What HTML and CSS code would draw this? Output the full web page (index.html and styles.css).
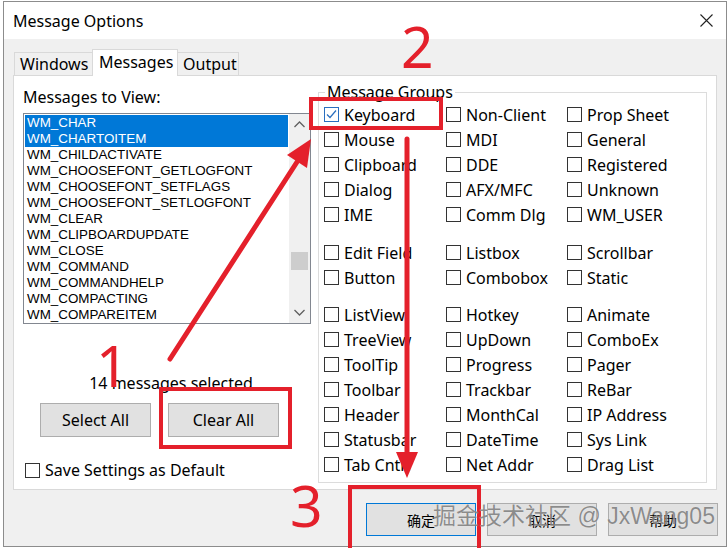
FILE: index.html
```html
<!DOCTYPE html>
<html lang="en">
<head>
    <meta charset="UTF-8">
    <title>Message Options</title>
    <link rel="stylesheet" href="styles.css">
</head>
<body>

    <div class="window">
        <!-- Title bar -->
        <div class="titlebar">
            <span class="title">Message Options</span>
            <svg class="close" width="13" height="13" viewBox="0 0 13 13">
                <path d="M0.5 0.5 L12.5 12.5 M12.5 0.5 L0.5 12.5" stroke="#222" stroke-width="1.1" fill="none"/>
            </svg>
        </div>

        <div class="client">
            <div class="tabs">
                <div class="tab tab-windows">Windows</div>
                <div class="tab tab-messages active">Messages</div>
                <div class="tab tab-output">Output</div>
            </div>

            <div class="panel">
                <!-- Left column: message list -->
                <div class="left">
                    <div class="label">Messages to View:</div>
                    <div class="listbox">
                        <ul class="items">
                            <li class="selected">WM_CHAR</li>
                            <li class="selected">WM_CHARTOITEM</li>
                            <li>WM_CHILDACTIVATE</li>
                            <li>WM_CHOOSEFONT_GETLOGFONT</li>
                            <li>WM_CHOOSEFONT_SETFLAGS</li>
                            <li>WM_CHOOSEFONT_SETLOGFONT</li>
                            <li>WM_CLEAR</li>
                            <li>WM_CLIPBOARDUPDATE</li>
                            <li>WM_CLOSE</li>
                            <li>WM_COMMAND</li>
                            <li>WM_COMMANDHELP</li>
                            <li>WM_COMPACTING</li>
                            <li>WM_COMPAREITEM</li>
                        </ul>
                        <div class="scrollbar">
                            <div class="arrow">
                                <svg width="11" height="7" viewBox="0 0 11 7"><path d="M0.5 6 L5.5 1 L10.5 6" stroke="#606060" stroke-width="1.3" fill="none"/></svg>
                            </div>
                            <div class="track"><div class="thumb"></div></div>
                            <div class="arrow">
                                <svg width="11" height="7" viewBox="0 0 11 7"><path d="M0.5 1 L5.5 6 L10.5 1" stroke="#606060" stroke-width="1.3" fill="none"/></svg>
                            </div>
                        </div>
                    </div>
                    <div class="status">14 messages selected</div>
                    <div class="btn-row">
                        <button class="btn">Select All</button>
                        <button class="btn">Clear All</button>
                    </div>
                    <div class="check save"><span class="box"></span>Save Settings as Default</div>
                </div>

                <!-- Right column: message groups -->
                <fieldset class="groups">
                    <legend>Message Groups</legend>
                    <div class="grid">
                        <div class="check"><span class="box checked">
                            <svg width="13" height="13" viewBox="0 0 13 13"><path d="M2 6.5 L5 9.5 L11 2.5" stroke="#2a6fbf" stroke-width="1.2" fill="none"/></svg>
                        </span>Keyboard</div>
                        <div class="check"><span class="box"></span>Non-Client</div>
                        <div class="check"><span class="box"></span>Prop Sheet</div>
                        <div class="check"><span class="box"></span>Mouse</div>
                        <div class="check"><span class="box"></span>MDI</div>
                        <div class="check"><span class="box"></span>General</div>
                        <div class="check"><span class="box"></span>Clipboard</div>
                        <div class="check"><span class="box"></span>DDE</div>
                        <div class="check"><span class="box"></span>Registered</div>
                        <div class="check"><span class="box"></span>Dialog</div>
                        <div class="check"><span class="box"></span>AFX/MFC</div>
                        <div class="check"><span class="box"></span>Unknown</div>
                        <div class="check"><span class="box"></span>IME</div>
                        <div class="check"><span class="box"></span>Comm Dlg</div>
                        <div class="check"><span class="box"></span>WM_USER</div>
                    </div>
                    <div class="grid sep-a">
                        <div class="check"><span class="box"></span>Edit Field</div>
                        <div class="check"><span class="box"></span>Listbox</div>
                        <div class="check"><span class="box"></span>Scrollbar</div>
                        <div class="check"><span class="box"></span>Button</div>
                        <div class="check"><span class="box"></span>Combobox</div>
                        <div class="check"><span class="box"></span>Static</div>
                    </div>
                    <div class="grid sep-b">
                        <div class="check"><span class="box"></span>ListView</div>
                        <div class="check"><span class="box"></span>Hotkey</div>
                        <div class="check"><span class="box"></span>Animate</div>
                        <div class="check"><span class="box"></span>TreeView</div>
                        <div class="check"><span class="box"></span>UpDown</div>
                        <div class="check"><span class="box"></span>ComboEx</div>
                        <div class="check"><span class="box"></span>ToolTip</div>
                        <div class="check"><span class="box"></span>Progress</div>
                        <div class="check"><span class="box"></span>Pager</div>
                        <div class="check"><span class="box"></span>Toolbar</div>
                        <div class="check"><span class="box"></span>Trackbar</div>
                        <div class="check"><span class="box"></span>ReBar</div>
                        <div class="check"><span class="box"></span>Header</div>
                        <div class="check"><span class="box"></span>MonthCal</div>
                        <div class="check"><span class="box"></span>IP Address</div>
                        <div class="check"><span class="box"></span>Statusbar</div>
                        <div class="check"><span class="box"></span>DateTime</div>
                        <div class="check"><span class="box"></span>Sys Link</div>
                        <div class="check"><span class="box"></span>Tab Cntrl</div>
                        <div class="check"><span class="box"></span>Net Addr</div>
                        <div class="check"><span class="box"></span>Drag List</div>
                    </div>
                </fieldset>
            </div>

            <!-- Dialog buttons -->
            <div class="actions">
                <button class="btn cjk default">确定</button>
                <button class="btn cjk">取消</button>
                <button class="btn cjk">帮助</button>
            </div>
        </div>
    </div>

    <!-- Red annotations drawn over the screenshot -->
    <svg class="marks" width="728" height="548" viewBox="0 0 728 548">
        <g fill="none" stroke="#e4202b" stroke-width="4">
            <rect x="311" y="99" width="130" height="29"/>
            <rect x="161" y="389" width="129" height="58"/>
            <rect x="350" y="487" width="129" height="70"/>
        </g>
        <g stroke="#e4202b" stroke-width="5" stroke-linecap="round">
            <line x1="170" y1="359" x2="297" y2="162"/>
            <line x1="407" y1="139" x2="407" y2="456"/>
        </g>
        <g fill="#e4202b">
            <polygon points="311,139 307,168 287,155"/>
            <polygon points="396,452 418,452 407,478"/>
        </g>
        <g class="num" fill="#e4202b">
            <text x="96" y="387">1</text>
            <text x="401" y="68">2</text>
            <text x="290" y="527">3</text>
        </g>
    </svg>

    <div class="watermark">掘金技术社区 @ JxWang05</div>

</body>
</html>
```

FILE: styles.css
```css
/* General */
body {
    margin: 0;
    width: 728px;
    height: 548px;
    position: relative;
    overflow: hidden;
    background-color: #ffffff;
    font-family: 'Noto Sans', 'Noto Sans CJK SC', sans-serif;
    font-size: 16px;
    color: #000;
}

.window {
    box-sizing: border-box;
    width: 724px;
    height: 546px;
    margin: 1px 0 0 3px;
    border: 1px solid #8c8c8c;
    display: flex;
    flex-direction: column;
    background-color: #f0f0f0;
}

/* Title bar */
.titlebar {
    height: 37px;
    flex: none;
    display: flex;
    align-items: center;
    justify-content: space-between;
    padding: 0 13px 0 9px;
    background-color: #fff;
    line-height: 20px;
}

.close {
    display: block;
}

.client {
    flex: 1;
    padding: 10px 0 0 9px;
}

/* Tabs */
.tabs {
    display: flex;
    align-items: flex-end;
    height: 26px;
    margin-left: 1px;
    position: relative;
    z-index: 1;
}

.tab {
    box-sizing: border-box;
    height: 23px;
    border: 1px solid #d9d9d9;
    border-bottom: none;
    line-height: 22px;
    padding-left: 5px;
    background-color: #f0f0f0;
}

.tab-windows { width: 78px; border-right: none; }
.tab-messages { width: 86px; }
.tab-output { width: 61px; border-left: none; }

.tab.active {
    height: 27px;
    margin-bottom: -1px;
    background-color: #fff;
    padding-left: 6px;
    line-height: 24px;
}

/* Tab panel */
.panel {
    box-sizing: border-box;
    width: 704px;
    height: 415px;
    border: 1px solid #d9d9d9;
    background-color: #fff;
    display: flex;
    align-items: flex-start;
    padding-left: 9px;
}

.left {
    width: 288px;
    padding-top: 11px;
    line-height: 20px;
}

.listbox {
    box-sizing: border-box;
    width: 288px;
    height: 211px;
    margin-top: 6px;
    border: 1px solid #828790;
    display: flex;
}

.items {
    flex: 1;
    list-style: none;
    margin: 0;
    padding: 1px;
    overflow: hidden;
    font-family: 'Liberation Sans', Arial, sans-serif;
    font-size: 13.4px;
}

.items li {
    height: 16px;
    line-height: 16px;
    padding-left: 2px;
    white-space: nowrap;
}

.items li.selected {
    background-color: #0078d7;
    color: #fff;
}

.scrollbar {
    width: 21px;
    display: flex;
    flex-direction: column;
    background-color: #f0f0f0;
}

.arrow {
    height: 21px;
    display: flex;
    align-items: center;
    justify-content: center;
}

.arrow svg {
    display: block;
}

.track {
    flex: 1;
    padding-top: 117px;
}

.thumb {
    height: 18px;
    margin: 0 2px;
    background-color: #cdcdcd;
}

.status {
    margin-top: 49px;
    padding-left: 8px;
    text-align: center;
}

.btn-row {
    display: flex;
    gap: 17px;
    margin-top: 10px;
    padding-left: 17px;
}

.btn {
    box-sizing: border-box;
    width: 111px;
    height: 34px;
    background-color: #e1e1e1;
    border: 1px solid #adadad;
    font-family: 'Noto Sans', sans-serif;
    font-size: 16px;
    color: #000;
    padding: 0;
}

/* Checkboxes */
.check {
    display: flex;
    align-items: center;
    gap: 5px;
    white-space: nowrap;
}

.box {
    box-sizing: border-box;
    width: 15px;
    height: 15px;
    border: 1px solid #333;
    background-color: #fff;
    flex: none;
    display: flex;
    align-items: center;
    justify-content: center;
}

.box.checked {
    border-color: #2a6fbf;
}

.box svg {
    display: block;
}

.save {
    margin-top: 23px;
    padding-left: 2px;
}

/* Message groups */
.groups {
    box-sizing: border-box;
    width: 389px;
    height: 401px;
    margin: 6px 0 0 7px;
    padding: 0 0 5px 5px;
    border: 1px solid #dcdcdc;
    line-height: 20px;
}

.groups legend {
    padding: 0 2px;
    margin-left: 1px;
    line-height: 20px;
}

.grid {
    display: grid;
    grid-template-columns: 122px 121px auto;
    grid-auto-rows: 25px;
}

.grid.sep-a { margin-top: 13px; }
.grid.sep-b { margin-top: 12px; }

/* Dialog buttons */
.actions {
    width: 705px;
    display: flex;
    justify-content: flex-end;
    gap: 11px;
    margin-top: 13px;
}

.actions .btn {
    width: 110px;
    height: 33px;
}

.btn.cjk {
    font-family: 'Noto Sans CJK SC', sans-serif;
    font-size: 14px;
}

.btn.default {
    border-color: #0078d7;
}

/* Annotations */
.marks {
    position: absolute;
    top: 0;
    left: 0;
}

.marks .num {
    font-family: 'Noto Sans', sans-serif;
    font-size: 57px;
}

.watermark {
    position: absolute;
    left: 433px;
    top: 502px;
    line-height: 28px;
    font-family: 'Liberation Sans', 'Noto Sans CJK SC', sans-serif;
    font-size: 23px;
    color: rgba(105, 105, 105, 0.75);
    text-shadow: 0 0 1px rgba(255, 255, 255, 0.7);
    white-space: nowrap;
}
```
